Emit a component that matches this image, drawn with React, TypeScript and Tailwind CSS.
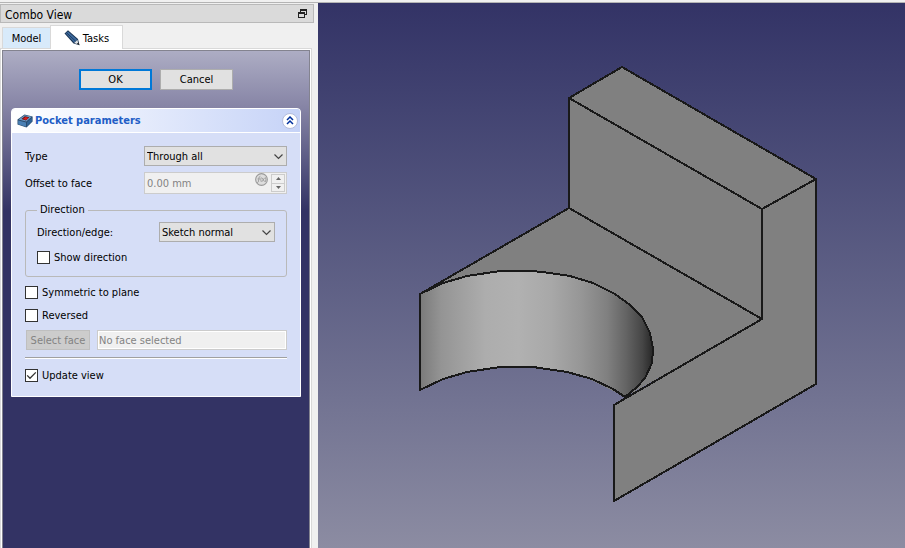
import React, { useState } from "react";

function PencilIcon() {
  return (
    <svg width="16" height="16" viewBox="0 0 16 16" aria-hidden="true">
      <path d="M.5 3.5 4 .3 14 9 15.5 15.2 9.5 13.4Z" fill="#1b3554" />
      <path d="M1.8 3.5 4 1.5 13 9.4 10.2 12.4Z" fill="#3d6a9e" />
      <path d="M2.8 3 11.6 11.2" stroke="#1d3c63" strokeWidth="1" />
      <path d="M10.2 13 13.4 9.8 14.6 14.4Z" fill="#dfe3e6" />
      <path d="M12.8 13.6 14.6 12.4 15.4 15.2Z" fill="#222" />
    </svg>
  );
}

function PocketIcon() {
  return (
    <svg width="16" height="14" viewBox="0 0 16 14" aria-hidden="true">
      <path d="M.5 5.5 7.5.4 15.6 2.5V7.5L9.5 13.6.5 10.5Z" fill="#2b4c6e" />
      <path d="M1.6 5.6 7.6 1.3 14.6 2.8 9.3 7.6Z" fill="#6f9fcb" />
      <path d="M1.2 6.5 9 8.5V12.8L1.2 10.2Z" fill="#4a80b4" />
      <path d="M10 8.3 15 3.8V7.2L10 12.4Z" fill="#2f6294" />
      <path d="M4.5 5 7.8 2.2 12.4 3.3 8.9 6.4Z" fill="#5a1010" />
      <path d="M5.8 5.1 8.4 3 11.6 3.8 9 6Z" fill="#d81b1b" />
    </svg>
  );
}

function RestoreIcon() {
  return (
    <svg width="9" height="9" viewBox="0 0 9 9" fill="none" stroke="#222" shapeRendering="crispEdges" aria-hidden="true">
      <path d="M2.5 3V.5H8.5V5.5H6.5M2 1.5H9" />
      <path d="M.5 3.5H6.5V8.5H.5ZM0 4.5H7" />
    </svg>
  );
}

function Combo({ label, id, className }: { label: string; id: string; className: string }) {
  return (
    <div className={`relative ${className}`}>
      <select
        id={id}
        className="block h-5 w-full appearance-none border border-[#adadad] bg-[#e1e1e1] pt-0.5 pr-6 pl-0.5 text-black outline-none"
      >
        <option>{label}</option>
      </select>
      <svg className="pointer-events-none absolute top-2 right-1" width="9" height="6" viewBox="0 0 9 6" fill="none" stroke="#444" strokeWidth="1.2" aria-hidden="true">
        <path d="M.5.5 4.5 4.5 8.5.5" />
      </svg>
    </div>
  );
}

function Check({ label, initial = false }: { label: string; initial?: boolean }) {
  const [on, setOn] = useState(initial);
  return (
    <label className="flex h-4 items-center gap-1">
      <span className="relative size-[13px]">
        <input
          type="checkbox"
          checked={on}
          onChange={(e) => setOn(e.target.checked)}
          className="block size-[13px] appearance-none border border-[#333] bg-white"
        />
        {on && (
          <svg className="pointer-events-none absolute inset-0" width="13" height="13" viewBox="0 0 13 13" fill="none" stroke="#333" strokeWidth="1.3" aria-hidden="true">
            <path d="M2.2 6.4 5 9.3 10.8 3.4" />
          </svg>
        )}
      </span>
      <span className="pt-px">{label}</span>
    </label>
  );
}

function PocketPanel() {
  return (
    <section className="mx-2 rounded-t border border-white bg-[#d6def7]">
      <header className="flex h-6 items-center rounded-t-[3px] border-b border-white bg-linear-to-r from-white to-[#c6d3f7] pr-0.5 pl-[5px]">
        <PocketIcon />
        <h2 className="ml-0.5 flex-1 pt-px font-bold text-[#215dc6]">Pocket parameters</h2>
        <button aria-label="Collapse" className="grid size-4 place-items-center rounded-full border border-[#b3bcdc] bg-white">
          <svg width="8" height="9" viewBox="0 0 8 9" fill="none" stroke="#00309c" strokeWidth="1.5" aria-hidden="true">
            <path d="M1 4 4 1 7 4M1 8 4 5 7 8" />
          </svg>
        </button>
      </header>

      <div className="px-[13px] pt-[13px] pb-[13px]">
        <div className="flex h-5 items-center">
          <label htmlFor="type" className="w-[119px] pt-0.5">Type</label>
          <Combo id="type" label="Through all" className="flex-1" />
        </div>
        <div className="mt-1.5 flex h-[22px] items-center">
          <label htmlFor="offset" className="w-[119px] pt-0.5">Offset to face</label>
          <div className="flex h-full min-w-0 flex-1 border border-[#ccc] bg-[#f0f0f0]">
            <input id="offset" disabled defaultValue="0.00 mm" className="min-w-0 flex-1 bg-transparent pt-0.5 pl-0.5 text-[#838383]" />
            <svg className="mr-0.5" width="13" height="13" viewBox="0 0 12 12" fill="none" stroke="#999" aria-hidden="true">
              <circle cx="6" cy="6" r="5.4" fill="#ddd" />
              <path d="M2 9Q3.4 9 3.4 6T5 3M2.3 5.5H4.7M5.8 4Q4.8 6 5.8 8.2M6.5 4.5 8.8 8M8.8 4.5 6.5 8M9.6 4Q10.6 6 9.6 8.2" strokeWidth=".8" />
            </svg>
            <div className="m-px flex w-[14px] flex-col border border-[#ccc]">
              <button disabled aria-label="Increase" className="grid flex-1 place-items-center border-b border-[#ccc]">
                <svg width="5" height="3" viewBox="0 0 5 3" fill="#666" aria-hidden="true"><path d="M0 3 2.5 0 5 3Z" /></svg>
              </button>
              <button disabled aria-label="Decrease" className="grid flex-1 place-items-center">
                <svg width="5" height="3" viewBox="0 0 5 3" fill="#666" aria-hidden="true"><path d="M0 0 2.5 3 5 0Z" /></svg>
              </button>
            </div>
          </div>
        </div>

        <fieldset className="mt-2 rounded-[3px] border border-[#b9b9b9] px-[11px] pb-[11px]">
          <legend className="h-4 px-[3px] leading-4">Direction</legend>
          <div className="mt-1 flex h-5 items-center">
            <label htmlFor="edge" className="w-[122px] pt-0.5">Direction/edge:</label>
            <Combo id="edge" label="Sketch normal" className="flex-1" />
          </div>
          <div className="mt-[7px]">
            <Check label="Show direction" />
          </div>
        </fieldset>

        <div className="mt-[7px] flex flex-col gap-[7px]">
          <Check label="Symmetric to plane" />
          <Check label="Reversed" />
        </div>
        <div className="mt-[7px] flex h-5 gap-[7px] pl-px">
          <button disabled className="w-16 border border-[#bfbfbf] bg-[#ccc] pt-0.5 text-[#838383]">Select face</button>
          <input
            disabled
            aria-label="Face"
            defaultValue="No face selected"
            className="min-w-0 flex-1 border border-[#ccc] bg-[#f0f0f0] pt-0.5 pl-px text-[#838383] inset-ring inset-ring-white"
          />
        </div>
        <div className="mt-[7px] mb-2 h-0.5 border-t border-[#a0a0a0] bg-white" />
        <Check label="Update view" initial />
      </div>
    </section>
  );
}

const upperArc =
  "M420 294 443 283 467 276 500 271 533 271 550 273 570 276 593 283 615 294 630 305 642 317 650 333 653 349 652 363 645 378 637 387 625 397";
const lowerArc = "625 397 613 389 592 379 567 372 533 367 500 367 467 372 443 379 420 390";

function ModelView() {
  return (
    <svg className="h-full w-full" viewBox="318 3 587 545" role="img" aria-label="3D model" strokeLinejoin="round">
      <defs>
        <linearGradient id="cylinder" gradientUnits="userSpaceOnUse" x1="420" y1="0" x2="654" y2="0">
          <stop offset="0" stopColor="#7a7a7a" />
          <stop offset=".09" stopColor="#949494" />
          <stop offset=".18" stopColor="#a0a0a0" />
          <stop offset=".28" stopColor="#adadad" />
          <stop offset=".42" stopColor="#b1b1b1" />
          <stop offset=".56" stopColor="#a8a8a8" />
          <stop offset=".69" stopColor="#969696" />
          <stop offset=".8" stopColor="#808080" />
          <stop offset=".88" stopColor="#646464" />
          <stop offset=".95" stopColor="#464646" />
          <stop offset="1" stopColor="#242424" />
        </linearGradient>
      </defs>
      <g shapeRendering="crispEdges" stroke="#191919" strokeWidth="2">
        <path d="M420 294 569 208 762 319 625 397Z" fill="#808080" stroke="none" />
        <path d="M420 294 569 208 762 319" fill="none" />
        <path d={`${upperArc} ${lowerArc}Z`} fill="url(#cylinder)" />
        <path d="M569 98 762 209V319L569 208Z" fill="#808080" />
        <path d="M569 98 622 67 816 179 762 209Z" fill="#808080" />
        <path d="M762 209 816 179V384L614 501V405L762 319Z" fill="#808080" />
      </g>
    </svg>
  );
}

export default function App() {
  return (
    <div className="flex h-screen flex-col bg-[#f0f0f0] pt-0.5 font-['DejaVu_Sans_Condensed','DejaVu_Sans',sans-serif] text-[11px] leading-4 text-black">
      <div className="flex min-h-0 flex-1 border-t border-[#b4b4b4]">
        <aside className="flex w-[318px] shrink-0 flex-col pt-px">
          <div className="mr-1 flex h-[19px] items-center justify-between border border-[#b9b9b9] bg-[#dadada] pr-1.5 pl-1 text-xs">
            <h1 className="pt-0.5">Combo View</h1>
            <button aria-label="Float panel"><RestoreIcon /></button>
          </div>
          <div role="tablist" className="mt-0.5 flex h-[23px] items-end pl-0.5">
            <button role="tab" aria-selected="false" className="h-[21px] w-12 border border-r-0 border-b-0 border-[#d9d9d9] bg-[#d8eafa] pt-0.5">
              Model
            </button>
            <button role="tab" aria-selected="true" className="z-10 -mb-px flex h-6 w-[73px] items-center justify-center gap-[3px] border border-b-0 border-[#d9d9d9] bg-white">
              <PencilIcon />
              <span className="pt-0.5">Tasks</span>
            </button>
          </div>
          <div className="mr-1.5 min-h-0 flex-1 border border-b-0 border-[#d9d9d9] bg-white px-px pt-px">
            <div className="h-full border border-b-0 border-[#83838f] bg-[#333364] bg-[linear-gradient(#adadc4,#8785a6_55px,#333364_160px)] px-0 pt-[18px]">
              <div className="flex justify-center gap-2">
                <button className="h-[21px] w-[73px] border-2 border-[#0078d7] bg-[#e1e1e1]">OK</button>
                <button className="h-[21px] w-[73px] border border-[#adadad] bg-[#e1e1e1]">Cancel</button>
              </div>
              <div className="h-[18px]" />
              <PocketPanel />
            </div>
          </div>
        </aside>
        <main className="min-w-0 flex-1 bg-linear-to-b from-[#333366] to-[#8c8ca2]">
          <ModelView />
        </main>
      </div>
    </div>
  );
}
